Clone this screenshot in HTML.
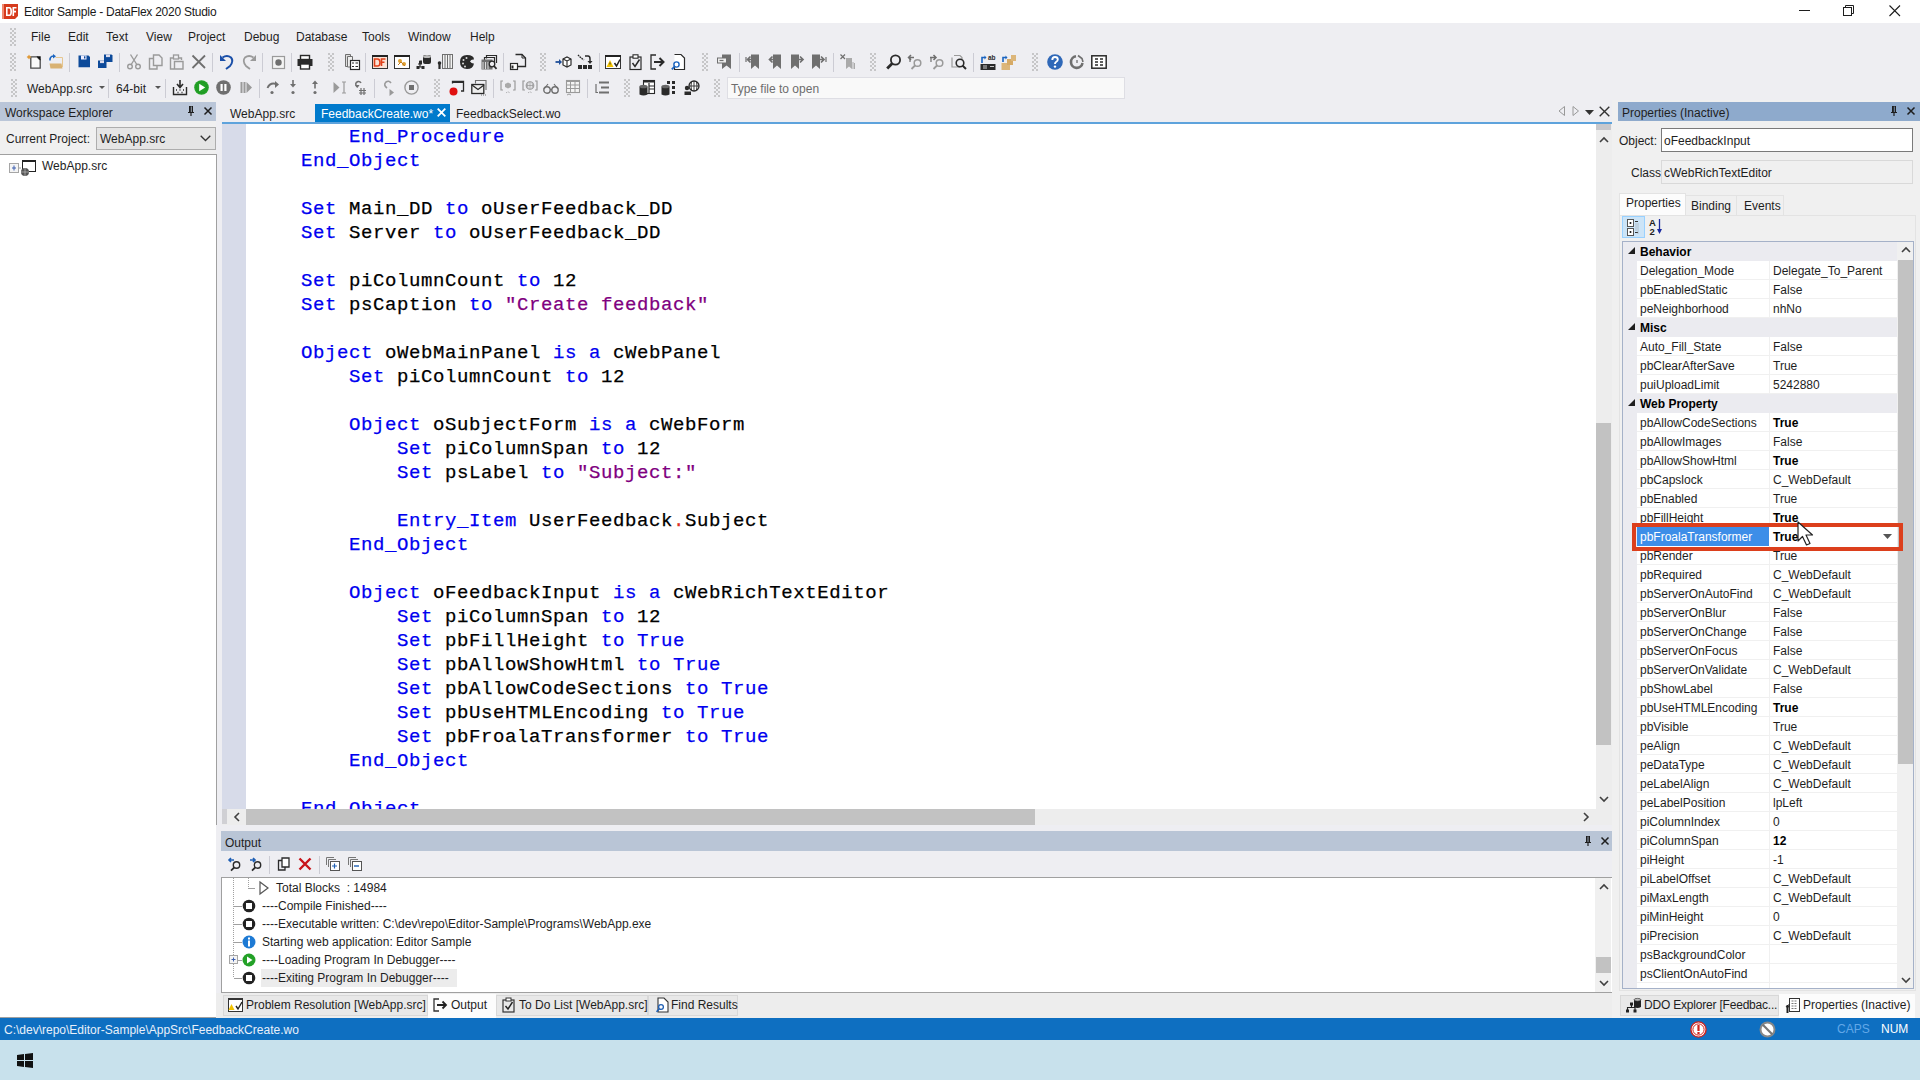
<!DOCTYPE html><html><head><meta charset="utf-8"><style>
*{margin:0;padding:0;box-sizing:border-box}
html,body{width:1920px;height:1080px;overflow:hidden;background:#eeeef2;font-family:"Liberation Sans",sans-serif;font-size:12px;color:#1e1e1e}
.a{position:absolute}
.t{position:absolute;white-space:nowrap;line-height:14px}
svg{position:absolute;overflow:visible}
.grip{position:absolute;width:6px;background-image:repeating-conic-gradient(transparent 0 25%,#c6c6c8 0 50%);background-size:4px 4px}
.sep{position:absolute;width:1px;background:#ccccd4}
.code{position:absolute;left:0;-webkit-text-stroke:0.25px currentColor;font-family:"Liberation Mono",monospace;font-size:19px;letter-spacing:0.6px;line-height:24px;white-space:pre;color:#000}
.k{color:#0000f0}
.s{color:#7f007f}
.prow{position:absolute;left:1637px;width:260px;height:19px}
</style></head><body><div class="a" style="left:0px;top:0px;width:1920px;height:23px;background:#fff"></div><div class="t" style="left:24px;top:5px;font-size:12px;letter-spacing:-0.25px;color:#1a1a1a">Editor Sample - DataFlex 2020 Studio</div><div class="a" style="left:0px;top:23px;width:1920px;height:77px;background:#eeeef2"></div><div class="t" style="left:31px;top:30px;">File</div><div class="t" style="left:68px;top:30px;">Edit</div><div class="t" style="left:106px;top:30px;">Text</div><div class="t" style="left:146px;top:30px;">View</div><div class="t" style="left:188px;top:30px;">Project</div><div class="t" style="left:244px;top:30px;">Debug</div><div class="t" style="left:296px;top:30px;">Database</div><div class="t" style="left:362px;top:30px;">Tools</div><div class="t" style="left:408px;top:30px;">Window</div><div class="t" style="left:470px;top:30px;">Help</div><div class="a" style="left:0px;top:100px;width:216px;height:918px;background:#f0f0f0"></div><div class="a" style="left:0px;top:102px;width:216px;height:19px;background:#bac6d8"></div><div class="t" style="left:5px;top:106px;">Workspace Explorer</div><div class="t" style="left:6px;top:132px;">Current Project:</div><div class="a" style="left:96px;top:127px;width:120px;height:23px;background:#e5e5e5;border:1px solid #adadad"></div><div class="t" style="left:100px;top:132px;">WebApp.src</div><div class="a" style="left:0px;top:154px;width:217px;height:864px;background:#fff;border-top:1px solid #a0a0a0;border-right:1px solid #a0a0a0;border-bottom:1px solid #a0a0a0"></div><div class="t" style="left:42px;top:159px;">WebApp.src</div><div class="a" style="left:216px;top:100px;width:1402px;height:23px;background:#eeeef2"></div><div class="t" style="left:230px;top:107px;">WebApp.src</div><div class="a" style="left:315px;top:104px;width:135px;height:18px;background:#007acc"></div><div class="t" style="left:321px;top:107px;color:#fff">FeedbackCreate.wo*</div><div class="t" style="left:456px;top:107px;">FeedbackSelect.wo</div><div class="a" style="left:222px;top:122px;width:1390px;height:2px;background:#5ea3dc"></div><div class="a" style="left:222px;top:124px;width:1390px;height:685px;background:#fff"></div><div class="a" style="left:222px;top:124px;width:24px;height:685px;background:#d7dbe9"></div><div class="a" style="left:1596px;top:124px;width:18px;height:685px;background:#ededed"></div><div class="a" style="left:1596px;top:423px;width:15px;height:322px;background:#c2c2c2"></div><div class="a" style="left:222px;top:809px;width:1392px;height:16px;background:#ededed"></div><div class="a" style="left:246px;top:809px;width:789px;height:16px;background:#c2c2c2"></div><div class="a" style="left:216px;top:825px;width:1402px;height:193px;background:#eeeef2"></div><div class="a" style="left:221px;top:831px;width:1393px;height:20px;background:#b9c5d6"></div><div class="t" style="left:225px;top:836px;">Output</div><div class="a" style="left:221px;top:877px;width:1393px;height:116px;background:#fff;border:1px solid #a0a0a0"></div><div class="a" style="left:216px;top:993px;width:1402px;height:25px;background:#ededed"></div><div class="a" style="left:0px;top:1018px;width:1920px;height:22px;background:#0e6fc1"></div><div class="t" style="left:4px;top:1023px;color:#e8f0fa">C:\dev\repo\Editor-Sample\AppSrc\FeedbackCreate.wo</div><div class="a" style="left:0px;top:1040px;width:1920px;height:40px;background:#c8e1ec"></div><div class="a" style="left:1612px;top:100px;width:308px;height:918px;background:#f0f0f0"></div><div class="a" style="left:1618px;top:102px;width:302px;height:19px;background:#8eaacc"></div><div class="t" style="left:1622px;top:106px;">Properties (Inactive)</div><div class="t" style="left:1619px;top:134px;">Object:</div><div class="a" style="left:1661px;top:128px;width:252px;height:24px;background:#fff;border:1px solid #7a7a7a"></div><div class="t" style="left:1664px;top:134px;">oFeedbackInput</div><div class="t" style="left:1631px;top:166px;">Class</div><div class="a" style="left:1661px;top:160px;width:252px;height:24px;background:#f0f0f0;border:1px solid #d9d9d9"></div><div class="t" style="left:1664px;top:166px;">cWebRichTextEditor</div><div class="a" style="left:1622px;top:241px;width:292px;height:750px;background:#fff;border:1px solid #a5b1c8"></div><div class="grip" style="left:10px;top:28px;height:18px"></div><div class="grip" style="left:10px;top:53px;height:18px"></div><div class="grip" style="left:11px;top:79px;height:18px"></div><svg style="left:26px;top:54px" width="16" height="16" viewBox="0 0 16 16"><path d="M4.8 2.8H11L14.2 6V14.2H4.8Z" stroke="#4a4a4a" stroke-width="1.3" fill="#fafafa"/><path d="M10.5 2.3L14.7 6.5V2.3Z" fill="#111"/><path d="M3 0.5L3.7 2.3L5.5 3L3.7 3.7L3 5.5L2.3 3.7L0.5 3L2.3 2.3Z" fill="#e09a3a"/><circle cx="3" cy="3" r="1.6" fill="#e09a3a"/></svg><svg style="left:48px;top:54px" width="16" height="16" viewBox="0 0 16 16"><path d="M7.5 3.5H14.5V13" stroke="#e6c690" stroke-width="1" fill="none"/><path d="M1.5 9.5H13.5L14.5 14.5H2.5Z" fill="#d9b273"/><path d="M2 6.5Q1.5 2.5 5.5 2" stroke="#1a64c0" stroke-width="1.6" fill="none"/><path d="M5 0L8 2.2L5 4.4Z" fill="#1a64c0"/></svg><div class="sep" style="left:69px;top:53px;height:19px"></div><svg style="left:77px;top:54px" width="16" height="16" viewBox="0 0 16 16"><path d="M1.5 1.5H11.5L13 3V13.3H1.5Z" fill="#0d4a9a"/><rect x="4" y="1.5" width="5.5" height="4" fill="#eef"/><rect x="7" y="2.3" width="1.4" height="2.2" fill="#0d4a9a"/></svg><svg style="left:98px;top:54px" width="16" height="16" viewBox="0 0 16 16"><path d="M6 0.5H13.5L14.5 1.5V8H6Z" fill="#0d4a9a"/><rect x="8" y="0.5" width="4" height="2.6" fill="#dde"/><path d="M0 6.5H7.5L8.5 7.5V14H0Z" fill="#0d4a9a"/><rect x="2" y="6.5" width="4" height="2.6" fill="#dde"/></svg><div class="sep" style="left:119px;top:53px;height:19px"></div><svg style="left:126px;top:54px" width="16" height="16" viewBox="0 0 16 16"><circle cx="4" cy="12.5" r="2.3" stroke="#9a9a9a" stroke-width="1.4" fill="none"/><circle cx="12" cy="12.5" r="2.3" stroke="#9a9a9a" stroke-width="1.4" fill="none"/><path d="M5.2 10.5L11.5 0.5M10.8 10.5L4.5 0.5" stroke="#9a9a9a" stroke-width="1.4"/></svg><svg style="left:148px;top:54px" width="16" height="16" viewBox="0 0 16 16"><path d="M5 4.5H1.5V15H9V11.5" stroke="#9a9a9a" stroke-width="1.4" fill="none"/><path d="M5.5 1H11L14 4V11.5H5.5Z" stroke="#9a9a9a" stroke-width="1.4" fill="#eeeef2"/></svg><svg style="left:169px;top:54px" width="16" height="16" viewBox="0 0 16 16"><path d="M4 4H1.5V15H5" stroke="#9a9a9a" stroke-width="1.4" fill="none"/><path d="M10 4H12.5V6" stroke="#9a9a9a" stroke-width="1.4" fill="none"/><rect x="4.5" y="1" width="5" height="4" stroke="#9a9a9a" stroke-width="1.3" fill="none"/><path d="M5.5 7.5H14V15H5.5Z" stroke="#9a9a9a" stroke-width="1.4" fill="none"/></svg><svg style="left:191px;top:54px" width="16" height="16" viewBox="0 0 16 16"><path d="M1.5 1.5L14 14M14 1.5L1.5 14" stroke="#6f6f6f" stroke-width="1.8"/></svg><div class="sep" style="left:212px;top:53px;height:19px"></div><svg style="left:219px;top:54px" width="16" height="16" viewBox="0 0 16 16"><path d="M3.5 3.5Q8 0.5 12 3.5Q15 7 11 12L7 15" stroke="#1a4fa8" stroke-width="2" fill="none"/><path d="M1 1V7H7Z" fill="#1a4fa8"/></svg><svg style="left:241px;top:54px" width="16" height="16" viewBox="0 0 16 16"><path d="M12.5 3.5Q8 0.5 4 3.5Q1 7 5 12L9 15" stroke="#9a9a9a" stroke-width="1.8" fill="none"/><path d="M15 1V7H9Z" fill="#9a9a9a"/></svg><div class="sep" style="left:262px;top:53px;height:19px"></div><svg style="left:271px;top:54px" width="16" height="16" viewBox="0 0 16 16"><rect x="1.5" y="2.5" width="12" height="12" stroke="#9a9a9a" stroke-width="1.2" fill="#f4f4f4"/><circle cx="7.5" cy="8.5" r="3.2" fill="#6f6f6f"/></svg><div class="sep" style="left:291px;top:53px;height:19px"></div><svg style="left:297px;top:54px" width="16" height="16" viewBox="0 0 16 16"><rect x="3.5" y="1.5" width="9" height="4" fill="#fff" stroke="#2a2a2a" stroke-width="1.4"/><path d="M0.5 5H15.5V12H0.5Z" fill="#2a2a2a"/><rect x="3.5" y="10" width="9" height="5" fill="#fff" stroke="#2a2a2a" stroke-width="1.4"/></svg><div class="grip" style="left:328px;top:53px;height:18px"></div><svg style="left:344px;top:54px" width="16" height="16" viewBox="0 0 16 16"><path d="M1.5 0.5H6.5V12.5H1.5Z" fill="#ddd" stroke="#6f6f6f"/><path d="M3.5 2.5H8.5V13H3.5Z" fill="#eee" stroke="#6f6f6f"/><rect x="6.5" y="6.5" width="9" height="9" fill="#fff" stroke="#2a2a2a" stroke-width="1.2"/><path d="M8 9H10M11.5 9H14M8 12.5H10M11.5 12.5H14" stroke="#2a2a2a" stroke-width="1.2"/></svg><div class="sep" style="left:365px;top:53px;height:19px"></div><svg style="left:372px;top:54px" width="16" height="16" viewBox="0 0 16 16"><rect x="0.5" y="1.5" width="15" height="13" fill="#fbe3d6" stroke="#333"/><rect x="0" y="1" width="16" height="2" fill="#222"/><path d="M2.5 5H5.5Q8 5 8 8.5Q8 12 5.5 12H2.5Z" fill="none" stroke="#e0401a" stroke-width="1.6"/><path d="M9.5 12V5H13.5M9.5 8.3H12.5" stroke="#e0401a" stroke-width="1.6" fill="none"/></svg><svg style="left:394px;top:54px" width="16" height="16" viewBox="0 0 16 16"><rect x="0.5" y="1.5" width="15" height="13" fill="#fff" stroke="#333"/><rect x="0" y="1" width="16" height="2" fill="#222"/><circle cx="6" cy="7" r="2" fill="#e0a030"/><circle cx="10" cy="10" r="2" fill="#e0a030"/><path d="M4 11L7 8L11 12" stroke="#c07a20" fill="none"/></svg><svg style="left:416px;top:54px" width="16" height="16" viewBox="0 0 16 16"><rect x="7" y="1" width="8" height="9" rx="2" fill="#2a2a2a"/><ellipse cx="11" cy="2.5" rx="4" ry="1.6" fill="#bbb"/><path d="M6 7H4V13M4 13H1.5M4 13H7M2 10H6" stroke="#2a2a2a" stroke-width="1.2" fill="none"/><rect x="0.5" y="12" width="3" height="3" fill="#2a2a2a"/><rect x="5.5" y="12" width="3" height="3" fill="#2a2a2a"/><rect x="3" y="7" width="3" height="3" fill="#2a2a2a"/></svg><svg style="left:437px;top:54px" width="16" height="16" viewBox="0 0 16 16"><rect x="5.5" y="0.5" width="10" height="14" fill="#f4f4f4" stroke="#6f6f6f"/><path d="M8 1V14M10.5 1V14M13 1V14" stroke="#6f6f6f"/><path d="M2.5 9V15" stroke="#2a2a2a" stroke-width="2.2"/><circle cx="2.5" cy="9" r="1.8" fill="#2a2a2a"/></svg><svg style="left:459px;top:54px" width="16" height="16" viewBox="0 0 16 16"><path d="M8 1Q15 1 15 5.5Q12 5 11 7.5Q13 10 15 9.5Q14 15 8 15Q1 15 1 8Q1 1 8 1Z" fill="#2a2a2a"/><circle cx="4.5" cy="6" r="1" fill="#ddd"/><circle cx="7.5" cy="4" r="1" fill="#ddd"/><circle cx="4" cy="9.5" r="1" fill="#ddd"/><circle cx="6" cy="12.5" r="1" fill="#ddd"/></svg><svg style="left:481px;top:54px" width="16" height="16" viewBox="0 0 16 16"><path d="M5.5 4.5V1.5H15.5V9" stroke="#2a2a2a" stroke-width="1.2" fill="none"/><path d="M3.5 6.5V3.5H13.5V9" stroke="#2a2a2a" stroke-width="1.2" fill="none"/><rect x="0.5" y="5.5" width="11" height="10" fill="#6f6f6f"/><path d="M2 8V15M4.5 8V15M7 8V15" stroke="#ddd"/><circle cx="11" cy="10" r="2.8" fill="#eeeef2" stroke="#2a2a2a" stroke-width="1.3"/><path d="M13 12L15.5 14.8" stroke="#2a2a2a" stroke-width="1.8"/></svg><div class="sep" style="left:503px;top:53px;height:19px"></div><svg style="left:510px;top:54px" width="16" height="16" viewBox="0 0 16 16"><path d="M5.5 0.5H12L15.5 4V12.5H5.5" stroke="#2a2a2a" stroke-width="1.3" fill="none"/><path d="M12 0.5V4H15.5" stroke="#2a2a2a" fill="none"/><rect x="0.5" y="9.5" width="7" height="6" fill="#fff" stroke="#2a2a2a" stroke-width="1.2"/><rect x="1.5" y="11.5" width="2" height="3" fill="#2a2a2a"/></svg><div class="grip" style="left:540px;top:53px;height:18px"></div><svg style="left:555px;top:54px" width="16" height="16" viewBox="0 0 16 16"><path d="M0.5 8H5.5" stroke="#1f4f9a" stroke-width="1.8"/><path d="M4 5L7 8L4 11Z" fill="#1f4f9a"/><path d="M8 5L12 3L16 5V11L12 13L8 11Z" fill="#fff" stroke="#2a2a2a" stroke-width="1.2"/><path d="M8 5L12 7L16 5M12 7V13" stroke="#2a2a2a" stroke-width="1.1" fill="none"/></svg><svg style="left:577px;top:54px" width="16" height="16" viewBox="0 0 16 16"><path d="M1 1L4 4L7 6" stroke="#2a2a2a" stroke-width="1.4" stroke-dasharray="1.5 1"/><path d="M8 2H11Q13 2 13 5V8" stroke="#2a2a2a" stroke-width="1.5" fill="none"/><path d="M10.5 7L13 10L15.5 7Z" fill="#2a2a2a"/><rect x="1" y="11" width="4" height="4" fill="#2a2a2a"/><rect x="6" y="11" width="4" height="4" fill="#2a2a2a"/><rect x="11" y="11" width="4" height="4" fill="#2a2a2a"/></svg><div class="sep" style="left:599px;top:53px;height:19px"></div><svg style="left:605px;top:54px" width="16" height="16" viewBox="0 0 16 16"><rect x="0.5" y="1.5" width="15" height="13" fill="#fff" stroke="#333"/><rect x="0" y="1" width="16" height="2" fill="#222"/><path d="M5 6L8.5 13H1.5Z" fill="#f2c200"/><path d="M5 8.5V10.5" stroke="#333"/><path d="M9.5 9L11.5 12L15 5.5" stroke="#222" stroke-width="1.5" fill="none"/></svg><svg style="left:629px;top:54px" width="16" height="16" viewBox="0 0 16 16"><rect x="1" y="3" width="11" height="12.5" fill="none" stroke="#2a2a2a" stroke-width="1.2"/><rect x="4" y="0.8" width="5" height="3.4" fill="#fff" stroke="#2a2a2a" stroke-width="1.1"/><path d="M3.5 9L6 12.5L10.5 5.5" stroke="#2a2a2a" stroke-width="1.5" fill="none"/></svg><svg style="left:650px;top:54px" width="16" height="16" viewBox="0 0 16 16"><path d="M6 1H1V15H6" stroke="#2a2a2a" stroke-width="1.3" fill="none"/><path d="M4 8H13.5M9.5 4L13.5 8L9.5 12" stroke="#2a2a2a" stroke-width="2" fill="none"/></svg><svg style="left:671px;top:54px" width="16" height="16" viewBox="0 0 16 16"><path d="M3.5 0.5H10L13.5 4V15.5H3.5V9" stroke="#2a2a2a" stroke-width="1.2" fill="#fff"/><circle cx="5.5" cy="10.5" r="2.6" fill="#fff" stroke="#1a64c0" stroke-width="1.4"/><path d="M3.5 12.5L0.8 15.3" stroke="#1a64c0" stroke-width="1.8"/></svg><div class="grip" style="left:702px;top:53px;height:18px"></div><svg style="left:717px;top:54px" width="16" height="16" viewBox="0 0 16 16"><path d="M5 0.5H14V15L9.5 11.5L5 15Z" fill="#6f6f6f"/><rect x="0.5" y="4" width="9" height="5" fill="#eee" stroke="#6f6f6f"/><path d="M2.5 6.5H6.5" stroke="#6f6f6f" stroke-width="1.2"/></svg><div class="sep" style="left:739px;top:53px;height:19px"></div><svg style="left:745px;top:54px" width="16" height="16" viewBox="0 0 16 16"><path d="M6 0.5H14V15L10 11.5L6 15Z" fill="#6f6f6f"/><path d="M1 3V8" stroke="#6f6f6f" stroke-width="1.2"/><path d="M3 5.5H9M5.5 2.5L2.5 5.5L5.5 8.5" stroke="#6f6f6f" stroke-width="1.7" fill="none"/></svg><svg style="left:768px;top:54px" width="16" height="16" viewBox="0 0 16 16"><path d="M5 0.5H13V15L9 11.5L5 15Z" fill="#6f6f6f"/><path d="M1.5 5.5H8M4.5 2.5L1.5 5.5L4.5 8.5" stroke="#6f6f6f" stroke-width="1.7" fill="none"/></svg><svg style="left:790px;top:54px" width="16" height="16" viewBox="0 0 16 16"><path d="M1 0.5H9V15L5 11.5L1 15Z" fill="#6f6f6f"/><path d="M7 5.5H13M10 2.5L13 5.5L10 8.5" stroke="#6f6f6f" stroke-width="1.7" fill="none"/></svg><svg style="left:811px;top:54px" width="16" height="16" viewBox="0 0 16 16"><path d="M1 0.5H9V15L5 11.5L1 15Z" fill="#6f6f6f"/><path d="M15 3V8" stroke="#6f6f6f" stroke-width="1.2"/><path d="M7 5.5H12.5M10 2.5L13 5.5L10 8.5" stroke="#6f6f6f" stroke-width="1.7" fill="none"/></svg><div class="sep" style="left:833px;top:53px;height:19px"></div><svg style="left:840px;top:54px" width="16" height="16" viewBox="0 0 16 16"><path d="M6 4H12V15L9 12.5L6 15Z" fill="#aaa"/><path d="M0.5 0.5L5 5M5 0.5L0.5 5" stroke="#6f6f6f" stroke-width="1.2"/><path d="M13 8V15M14.5 9V15" stroke="#aaa"/></svg><div class="grip" style="left:870px;top:53px;height:18px"></div><svg style="left:886px;top:54px" width="16" height="16" viewBox="0 0 16 16"><circle cx="9.5" cy="6" r="4.6" fill="none" stroke="#2a2a2a" stroke-width="1.8"/><path d="M6.2 9.5L1.2 14.5" stroke="#2a2a2a" stroke-width="2.8"/></svg><svg style="left:907px;top:54px" width="16" height="16" viewBox="0 0 16 16"><circle cx="10.5" cy="9" r="3.3" fill="none" stroke="#9a9a9a" stroke-width="1.5"/><path d="M8 11.5L4.5 15" stroke="#9a9a9a" stroke-width="1.8"/><path d="M1.5 3.5H7M4 1L1.5 3.5L4 6" stroke="#6f6f6f" stroke-width="1.5" fill="none"/><path d="M3 4V8" stroke="#6f6f6f" stroke-width="1.2"/></svg><svg style="left:929px;top:54px" width="16" height="16" viewBox="0 0 16 16"><circle cx="10.5" cy="9" r="3.3" fill="none" stroke="#9a9a9a" stroke-width="1.5"/><path d="M8 11.5L4.5 15" stroke="#9a9a9a" stroke-width="1.8"/><path d="M1 3.5H7M4.5 1L7 3.5L4.5 6" stroke="#6f6f6f" stroke-width="1.5" fill="none"/><path d="M2 4V8" stroke="#6f6f6f" stroke-width="1.2"/></svg><svg style="left:951px;top:54px" width="16" height="16" viewBox="0 0 16 16"><path d="M1 3.5V13H9" stroke="#9a9a9a" stroke-width="1.2" fill="none"/><path d="M3 1.5H9L11 3.5V5" stroke="#9a9a9a" stroke-width="1.2" fill="none"/><circle cx="9" cy="9" r="3.8" fill="#eeeef2" stroke="#2a2a2a" stroke-width="1.6"/><path d="M11.5 11.5L15 15" stroke="#2a2a2a" stroke-width="2"/></svg><div class="sep" style="left:973px;top:53px;height:19px"></div><svg style="left:980px;top:54px" width="16" height="16" viewBox="0 0 16 16"><path d="M2 9V3.5H5" stroke="#1a64c0" stroke-width="1.6" fill="none"/><path d="M4.5 1.5L6.5 3.5L4.5 5.5Z" fill="#1a64c0"/><text x="8" y="6" font-family="Liberation Sans" font-size="6.5" font-weight="bold" fill="#2a2a2a">ab</text><rect x="0.5" y="10" width="15" height="6" fill="#2a2a2a"/><path d="M4 11V15M6 11V15M10 12.5H14" stroke="#ddd" stroke-width="0.9"/></svg><svg style="left:1001px;top:54px" width="16" height="16" viewBox="0 0 16 16"><path d="M0.5 9H9V16H0.5Z" fill="#dcb67a"/><path d="M6 5H12V11H6Z" fill="#d6aa66"/><path d="M10 1H15V7H10Z" fill="#dcb67a"/><path d="M2 8V3.5H5" stroke="#1a64c0" stroke-width="1.6" fill="none"/><path d="M4.5 1.5L6.5 3.5L4.5 5.5Z" fill="#1a64c0"/></svg><div class="grip" style="left:1032px;top:53px;height:18px"></div><svg style="left:1047px;top:54px" width="16" height="16" viewBox="0 0 16 16"><circle cx="8" cy="8" r="7.8" fill="#2f68b8"/><path d="M5.3 6Q5.3 3 8 3Q10.8 3 10.8 5.5Q10.8 7 9 8Q8 8.6 8 10" stroke="#fff" stroke-width="1.9" fill="none"/><circle cx="8" cy="12.6" r="1.2" fill="#fff"/></svg><svg style="left:1069px;top:54px" width="16" height="16" viewBox="0 0 16 16"><path d="M13.5 9A5.8 5.8 0 1 1 7 2.3" stroke="#6f6f6f" stroke-width="2.6" fill="none"/><path d="M9 1.5L13 4.5L14 8" stroke="#6f6f6f" stroke-width="1.6" fill="none"/><path d="M8 6V9" stroke="#6f6f6f" stroke-width="1.3"/></svg><svg style="left:1091px;top:54px" width="16" height="16" viewBox="0 0 16 16"><rect x="0.8" y="1.8" width="14.4" height="12.4" fill="#fff" stroke="#2a2a2a" stroke-width="1.5"/><path d="M4 5H7M9 5H12M4 8H7M9 8H12M4 11H7M9 11H12" stroke="#2a2a2a" stroke-width="1.5"/></svg><svg style="left:172px;top:80px" width="16" height="16" viewBox="0 0 16 16"><path d="M1.5 7V14.5H14.5V7" stroke="#2a2a2a" stroke-width="1.4" fill="none"/><path d="M8 0V7M5 4L8 7.5L11 4" stroke="#2a2a2a" stroke-width="1.6" fill="none"/><path d="M4 10H5M7.5 10H8.5M11 10H12M5.5 12.5H6.5M9.5 12.5H10.5" stroke="#2a2a2a" stroke-width="1.3"/></svg><svg style="left:194px;top:80px" width="16" height="16" viewBox="0 0 16 16"><circle cx="7.5" cy="7.5" r="7.3" fill="#23a127"/><circle cx="7.5" cy="7.5" r="5.3" fill="none" stroke="#1b8f1f" stroke-width="0.5"/><path d="M5.2 3.8L11.2 7.5L5.2 11.2Z" fill="#fff"/></svg><svg style="left:216px;top:80px" width="16" height="16" viewBox="0 0 16 16"><circle cx="7.5" cy="7.5" r="7.3" fill="#6f6f6f"/><rect x="4.5" y="4" width="2.2" height="7" fill="#fff"/><rect x="8.3" y="4" width="2.2" height="7" fill="#fff"/></svg><svg style="left:240px;top:80px" width="16" height="16" viewBox="0 0 16 16"><rect x="0.5" y="2" width="2" height="11" fill="#9a9a9a"/><rect x="3.5" y="2" width="2" height="11" fill="#9a9a9a"/><path d="M6.5 2L12 7.5L6.5 13Z" fill="#9a9a9a"/></svg><div class="sep" style="left:259px;top:79px;height:19px"></div><svg style="left:266px;top:80px" width="16" height="16" viewBox="0 0 16 16"><path d="M1.5 8Q4 2 10.5 4" stroke="#6f6f6f" stroke-width="1.9" fill="none"/><path d="M9 1L13 4.5L9 8Z" fill="#6f6f6f"/><circle cx="6" cy="12.5" r="1.6" fill="#6f6f6f"/></svg><svg style="left:289px;top:80px" width="16" height="16" viewBox="0 0 16 16"><path d="M4 0V6" stroke="#6f6f6f" stroke-width="1.6"/><path d="M1 4L4 7.5L7 4Z" fill="#6f6f6f"/><circle cx="4" cy="12.5" r="1.6" fill="#6f6f6f"/></svg><svg style="left:311px;top:80px" width="16" height="16" viewBox="0 0 16 16"><path d="M4 2V8.5" stroke="#6f6f6f" stroke-width="1.6"/><path d="M1 4L4 0.5L7 4Z" fill="#6f6f6f"/><circle cx="4" cy="12.5" r="1.6" fill="#6f6f6f"/></svg><svg style="left:333px;top:80px" width="16" height="16" viewBox="0 0 16 16"><path d="M0.5 2L6.5 7.5L0.5 13Z" fill="#9a9a9a"/><path d="M9 2H13M11 2V13M9 13H13" stroke="#9a9a9a" stroke-width="1.2"/></svg><svg style="left:354px;top:80px" width="16" height="16" viewBox="0 0 16 16"><path d="M3 7Q0 3 4 1.5Q6 1 7 3" stroke="#6f6f6f" stroke-width="1.5" fill="none"/><path d="M1 5L3.5 8L5.5 5Z" fill="#6f6f6f"/><path d="M7 8V15M10 8V15M5 10.5H12M5 13H12" stroke="#6f6f6f" stroke-width="1.2"/></svg><div class="sep" style="left:374px;top:79px;height:19px"></div><svg style="left:381px;top:80px" width="16" height="16" viewBox="0 0 16 16"><path d="M6 8Q2 5 5 2Q8 0 10 3" stroke="#9a9a9a" stroke-width="1.6" fill="none"/><path d="M8.5 9L13 12.5L8.5 16Z" fill="#9a9a9a"/></svg><svg style="left:404px;top:80px" width="16" height="16" viewBox="0 0 16 16"><circle cx="7.5" cy="7.5" r="6.6" fill="none" stroke="#9a9a9a" stroke-width="1.4"/><rect x="5" y="5" width="5" height="5" fill="#6f6f6f"/></svg><div class="grip" style="left:434px;top:79px;height:18px"></div><svg style="left:449px;top:80px" width="16" height="16" viewBox="0 0 16 16"><path d="M3.5 3.5V1.5H14.5V11H12" stroke="#2a2a2a" stroke-width="1.3" fill="none"/><rect x="3" y="1" width="12" height="2" fill="#2a2a2a"/><circle cx="4.5" cy="11.5" r="4" fill="#e01010"/></svg><svg style="left:471px;top:80px" width="16" height="16" viewBox="0 0 16 16"><path d="M4.5 3.5V0.5H15V10" stroke="#6f6f6f" stroke-width="1.1" fill="none"/><rect x="0.8" y="4.5" width="12" height="9" fill="#eee" stroke="#2a2a2a" stroke-width="1.3"/><path d="M1 5L7 9.5L13 5" stroke="#2a2a2a" stroke-width="1.2" fill="none"/><path d="M10 15H15" stroke="#6f6f6f" stroke-dasharray="1 1"/></svg><div class="sep" style="left:493px;top:79px;height:19px"></div><svg style="left:500px;top:80px" width="16" height="16" viewBox="0 0 16 16"><path d="M3 1H1V10H3M13 1H15V10H13" stroke="#9a9a9a" stroke-width="1.2" fill="none"/><path d="M5 4L8 2.5L11 4V7L8 8.5L5 7Z" fill="#aaa"/><path d="M6 13Q8 11 10 13" stroke="#9a9a9a" fill="none" stroke-dasharray="1 1"/></svg><svg style="left:522px;top:80px" width="16" height="16" viewBox="0 0 16 16"><path d="M3 1H1V10H3M13 1H15V10H13" stroke="#9a9a9a" stroke-width="1.2" fill="none"/><circle cx="8" cy="5.5" r="3.8" fill="none" stroke="#9a9a9a" stroke-width="1.1"/><path d="M4.5 5.5H11.5M8 1.7V9.3M6 2.5Q5 5.5 6 8.5M10 2.5Q11 5.5 10 8.5" stroke="#9a9a9a" stroke-width="0.8" fill="none"/><path d="M6 13Q8 11 10 13" stroke="#9a9a9a" fill="none" stroke-dasharray="1 1"/></svg><svg style="left:543px;top:80px" width="16" height="16" viewBox="0 0 16 16"><circle cx="4" cy="10" r="3.2" fill="none" stroke="#6f6f6f" stroke-width="1.4"/><circle cx="12" cy="10" r="3.2" fill="none" stroke="#6f6f6f" stroke-width="1.4"/><path d="M1 9L5 4M15 9L11 4M7 9.5H9" stroke="#6f6f6f" stroke-width="1.2"/></svg><svg style="left:565px;top:80px" width="16" height="16" viewBox="0 0 16 16"><rect x="1.5" y="0.5" width="13" height="12" fill="#f4f4f4" stroke="#9a9a9a" stroke-width="1.1"/><rect x="1" y="0" width="14" height="2" fill="#9a9a9a"/><path d="M1 5H15M1 8.5H15M5.5 1V13M10 1V13" stroke="#9a9a9a"/><path d="M2 15Q4 13 6 15" stroke="#9a9a9a" fill="none"/></svg><div class="sep" style="left:587px;top:79px;height:19px"></div><svg style="left:594px;top:80px" width="16" height="16" viewBox="0 0 16 16"><path d="M5 2.5H15M7 7.5H15M5 12.5H15" stroke="#6f6f6f" stroke-width="2.2"/><path d="M2 4V12.5H4" stroke="#6f6f6f" stroke-width="1.2" fill="none"/></svg><div class="grip" style="left:624px;top:79px;height:18px"></div><svg style="left:639px;top:80px" width="16" height="16" viewBox="0 0 16 16"><rect x="4.5" y="0.5" width="11" height="13" fill="#fff" stroke="#2a2a2a" stroke-width="1.1"/><rect x="4" y="0" width="12" height="2.5" fill="#2a2a2a"/><path d="M10 3V13M10 6H15M10 9H15" stroke="#2a2a2a" stroke-width="1.2"/><path d="M0.5 6.5H8.5V14.5Q4.5 16.5 0.5 14.5Z" fill="#2a2a2a"/><ellipse cx="4.5" cy="6.5" rx="4" ry="1.8" fill="#666"/></svg><svg style="left:661px;top:80px" width="16" height="16" viewBox="0 0 16 16"><path d="M6 1H9V4H6ZM11 1H14V4H11ZM11 6H14V9H11ZM11 11H14V14H11Z" fill="#2a2a2a"/><path d="M0.5 6.5H8.5V14.5Q4.5 16.5 0.5 14.5Z" fill="#2a2a2a"/><ellipse cx="4.5" cy="6.5" rx="4" ry="1.8" fill="#666"/></svg><svg style="left:684px;top:80px" width="16" height="16" viewBox="0 0 16 16"><circle cx="10" cy="6" r="5" fill="#fff" stroke="#2a2a2a" stroke-width="1.3"/><path d="M5 6H15M10 1V11M7.5 2Q6.5 6 7.5 10M12.5 2Q13.5 6 12.5 10" stroke="#2a2a2a" stroke-width="0.9" fill="none"/><circle cx="3" cy="8" r="2.2" fill="#2a2a2a"/><path d="M0.5 11.5H7V15H0.5Z" fill="#2a2a2a"/></svg><div class="grip" style="left:714px;top:79px;height:18px"></div><div class="t" style="left:27px;top:82px">WebApp.src</div><svg style="left:99px;top:86px" width="6" height="3"><path d="M0 0H6L3 3Z" fill="#555"/></svg><div class="sep" style="left:108px;top:79px;height:19px"></div><div class="t" style="left:116px;top:82px">64-bit</div><svg style="left:155px;top:86px" width="6" height="3"><path d="M0 0H6L3 3Z" fill="#555"/></svg><div class="sep" style="left:165px;top:79px;height:19px"></div><div class="a" style="left:727px;top:77px;width:398px;height:22px;background:#f9f9f9;border:1px solid #dedee4"></div><div class="t" style="left:731px;top:82px;color:#6d6d6d">Type file to open</div><div class="a" style="left:246px;top:124px;width:1350px;height:685px;overflow:hidden"><div class="code" style="left:55px;top:1px">    <span class="k">End_Procedure</span></div><div class="code" style="left:55px;top:25px"><span class="k">End_Object</span></div><div class="code" style="left:55px;top:49px"></div><div class="code" style="left:55px;top:73px"><span class="k">Set</span> Main_DD <span class="k">to</span> oUserFeedback_DD</div><div class="code" style="left:55px;top:97px"><span class="k">Set</span> Server <span class="k">to</span> oUserFeedback_DD</div><div class="code" style="left:55px;top:121px"></div><div class="code" style="left:55px;top:145px"><span class="k">Set</span> piColumnCount <span class="k">to</span> 12</div><div class="code" style="left:55px;top:169px"><span class="k">Set</span> psCaption <span class="k">to</span> <span class="s">&quot;Create feedback&quot;</span></div><div class="code" style="left:55px;top:193px"></div><div class="code" style="left:55px;top:217px"><span class="k">Object</span> oWebMainPanel <span class="k">is</span> <span class="k">a</span> cWebPanel</div><div class="code" style="left:55px;top:241px">    <span class="k">Set</span> piColumnCount <span class="k">to</span> 12</div><div class="code" style="left:55px;top:265px"></div><div class="code" style="left:55px;top:289px">    <span class="k">Object</span> oSubjectForm <span class="k">is</span> <span class="k">a</span> cWebForm</div><div class="code" style="left:55px;top:313px">        <span class="k">Set</span> piColumnSpan <span class="k">to</span> 12</div><div class="code" style="left:55px;top:337px">        <span class="k">Set</span> psLabel <span class="k">to</span> <span class="s">&quot;Subject:&quot;</span></div><div class="code" style="left:55px;top:361px"></div><div class="code" style="left:55px;top:385px">        <span class="k">Entry_Item</span> UserFeedback<span style="color:#e0301e">.</span>Subject</div><div class="code" style="left:55px;top:409px">    <span class="k">End_Object</span></div><div class="code" style="left:55px;top:433px"></div><div class="code" style="left:55px;top:457px">    <span class="k">Object</span> oFeedbackInput <span class="k">is</span> <span class="k">a</span> cWebRichTextEditor</div><div class="code" style="left:55px;top:481px">        <span class="k">Set</span> piColumnSpan <span class="k">to</span> 12</div><div class="code" style="left:55px;top:505px">        <span class="k">Set</span> pbFillHeight <span class="k">to</span> <span class="k">True</span></div><div class="code" style="left:55px;top:529px">        <span class="k">Set</span> pbAllowShowHtml <span class="k">to</span> <span class="k">True</span></div><div class="code" style="left:55px;top:553px">        <span class="k">Set</span> pbAllowCodeSections <span class="k">to</span> <span class="k">True</span></div><div class="code" style="left:55px;top:577px">        <span class="k">Set</span> pbUseHTMLEncoding <span class="k">to</span> <span class="k">True</span></div><div class="code" style="left:55px;top:601px">        <span class="k">Set</span> pbFroalaTransformer <span class="k">to</span> <span class="k">True</span></div><div class="code" style="left:55px;top:625px">    <span class="k">End_Object</span></div><div class="code" style="left:55px;top:649px"></div><div class="code" style="left:55px;top:673px"><span class="k">End_Object</span></div></div><div class="a" style="left:1619px;top:193px;width:67px;height:23px;background:#fcfcfc;border:1px solid #e3e3e3;border-bottom:none"></div><div class="t" style="left:1626px;top:196px">Properties</div><div class="a" style="left:1686px;top:195px;width:51px;height:21px;background:#f0f0f0;border:1px solid #e3e3e3;border-left:none;border-bottom:none"></div><div class="t" style="left:1691px;top:199px">Binding</div><div class="a" style="left:1737px;top:195px;width:47px;height:21px;background:#f0f0f0;border:1px solid #e3e3e3;border-left:none;border-bottom:none"></div><div class="t" style="left:1744px;top:199px">Events</div><div class="a" style="left:1619px;top:215px;width:297px;height:776px;background:#f0f0f0;border:1px solid #e3e3e3"></div><div class="a" style="left:1622px;top:216px;width:23px;height:22px;background:#cce4f7;border:1px solid #99d1ff"></div><div class="a" style="left:1622px;top:241px;width:292px;height:748px;background:#fff;border:1px solid #a5b1c8;overflow:hidden"><div class="a" style="left:0;top:0px;width:274px;height:19px;background:#ebebf0"></div><svg style="left:5px;top:5px" width="7" height="7"><path d="M7 0V7H0Z" fill="#1e1e1e"/></svg><div class="t" style="left:17px;top:3px;font-weight:bold;color:#000">Behavior</div><div class="a" style="left:0;top:19px;width:14px;height:19px;background:#ebebf0"></div><div class="a" style="left:14px;top:37px;width:260px;height:1px;background:#f0f0f0"></div><div class="a" style="left:146px;top:19px;width:1px;height:19px;background:#f0f0f0"></div><div class="t" style="left:17px;top:22px">Delegation_Mode</div><div class="t" style="left:150px;top:22px;">Delegate_To_Parent</div><div class="a" style="left:0;top:38px;width:14px;height:19px;background:#ebebf0"></div><div class="a" style="left:14px;top:56px;width:260px;height:1px;background:#f0f0f0"></div><div class="a" style="left:146px;top:38px;width:1px;height:19px;background:#f0f0f0"></div><div class="t" style="left:17px;top:41px">pbEnabledStatic</div><div class="t" style="left:150px;top:41px;">False</div><div class="a" style="left:0;top:57px;width:14px;height:19px;background:#ebebf0"></div><div class="a" style="left:14px;top:75px;width:260px;height:1px;background:#f0f0f0"></div><div class="a" style="left:146px;top:57px;width:1px;height:19px;background:#f0f0f0"></div><div class="t" style="left:17px;top:60px">peNeighborhood</div><div class="t" style="left:150px;top:60px;">nhNo</div><div class="a" style="left:0;top:76px;width:274px;height:19px;background:#ebebf0"></div><svg style="left:5px;top:81px" width="7" height="7"><path d="M7 0V7H0Z" fill="#1e1e1e"/></svg><div class="t" style="left:17px;top:79px;font-weight:bold;color:#000">Misc</div><div class="a" style="left:0;top:95px;width:14px;height:19px;background:#ebebf0"></div><div class="a" style="left:14px;top:113px;width:260px;height:1px;background:#f0f0f0"></div><div class="a" style="left:146px;top:95px;width:1px;height:19px;background:#f0f0f0"></div><div class="t" style="left:17px;top:98px">Auto_Fill_State</div><div class="t" style="left:150px;top:98px;">False</div><div class="a" style="left:0;top:114px;width:14px;height:19px;background:#ebebf0"></div><div class="a" style="left:14px;top:132px;width:260px;height:1px;background:#f0f0f0"></div><div class="a" style="left:146px;top:114px;width:1px;height:19px;background:#f0f0f0"></div><div class="t" style="left:17px;top:117px">pbClearAfterSave</div><div class="t" style="left:150px;top:117px;">True</div><div class="a" style="left:0;top:133px;width:14px;height:19px;background:#ebebf0"></div><div class="a" style="left:14px;top:151px;width:260px;height:1px;background:#f0f0f0"></div><div class="a" style="left:146px;top:133px;width:1px;height:19px;background:#f0f0f0"></div><div class="t" style="left:17px;top:136px">puiUploadLimit</div><div class="t" style="left:150px;top:136px;">5242880</div><div class="a" style="left:0;top:152px;width:274px;height:19px;background:#ebebf0"></div><svg style="left:5px;top:157px" width="7" height="7"><path d="M7 0V7H0Z" fill="#1e1e1e"/></svg><div class="t" style="left:17px;top:155px;font-weight:bold;color:#000">Web Property</div><div class="a" style="left:0;top:171px;width:14px;height:19px;background:#ebebf0"></div><div class="a" style="left:14px;top:189px;width:260px;height:1px;background:#f0f0f0"></div><div class="a" style="left:146px;top:171px;width:1px;height:19px;background:#f0f0f0"></div><div class="t" style="left:17px;top:174px">pbAllowCodeSections</div><div class="t" style="left:150px;top:174px;font-weight:bold;color:#000;">True</div><div class="a" style="left:0;top:190px;width:14px;height:19px;background:#ebebf0"></div><div class="a" style="left:14px;top:208px;width:260px;height:1px;background:#f0f0f0"></div><div class="a" style="left:146px;top:190px;width:1px;height:19px;background:#f0f0f0"></div><div class="t" style="left:17px;top:193px">pbAllowImages</div><div class="t" style="left:150px;top:193px;">False</div><div class="a" style="left:0;top:209px;width:14px;height:19px;background:#ebebf0"></div><div class="a" style="left:14px;top:227px;width:260px;height:1px;background:#f0f0f0"></div><div class="a" style="left:146px;top:209px;width:1px;height:19px;background:#f0f0f0"></div><div class="t" style="left:17px;top:212px">pbAllowShowHtml</div><div class="t" style="left:150px;top:212px;font-weight:bold;color:#000;">True</div><div class="a" style="left:0;top:228px;width:14px;height:19px;background:#ebebf0"></div><div class="a" style="left:14px;top:246px;width:260px;height:1px;background:#f0f0f0"></div><div class="a" style="left:146px;top:228px;width:1px;height:19px;background:#f0f0f0"></div><div class="t" style="left:17px;top:231px">pbCapslock</div><div class="t" style="left:150px;top:231px;">C_WebDefault</div><div class="a" style="left:0;top:247px;width:14px;height:19px;background:#ebebf0"></div><div class="a" style="left:14px;top:265px;width:260px;height:1px;background:#f0f0f0"></div><div class="a" style="left:146px;top:247px;width:1px;height:19px;background:#f0f0f0"></div><div class="t" style="left:17px;top:250px">pbEnabled</div><div class="t" style="left:150px;top:250px;">True</div><div class="a" style="left:0;top:266px;width:14px;height:19px;background:#ebebf0"></div><div class="a" style="left:14px;top:284px;width:260px;height:1px;background:#f0f0f0"></div><div class="a" style="left:146px;top:266px;width:1px;height:19px;background:#f0f0f0"></div><div class="t" style="left:17px;top:269px">pbFillHeight</div><div class="t" style="left:150px;top:269px;font-weight:bold;color:#000;">True</div><div class="a" style="left:0;top:285px;width:14px;height:19px;background:#ebebf0"></div><div class="a" style="left:14px;top:303px;width:260px;height:1px;background:#f0f0f0"></div><div class="a" style="left:146px;top:285px;width:1px;height:19px;background:#f0f0f0"></div><div class="t" style="left:17px;top:288px">pbFroalaTransformer</div><div class="t" style="left:150px;top:288px;font-weight:bold;color:#000;">True</div><div class="a" style="left:0;top:304px;width:14px;height:19px;background:#ebebf0"></div><div class="a" style="left:14px;top:322px;width:260px;height:1px;background:#f0f0f0"></div><div class="a" style="left:146px;top:304px;width:1px;height:19px;background:#f0f0f0"></div><div class="t" style="left:17px;top:307px">pbRender</div><div class="t" style="left:150px;top:307px;">True</div><div class="a" style="left:0;top:323px;width:14px;height:19px;background:#ebebf0"></div><div class="a" style="left:14px;top:341px;width:260px;height:1px;background:#f0f0f0"></div><div class="a" style="left:146px;top:323px;width:1px;height:19px;background:#f0f0f0"></div><div class="t" style="left:17px;top:326px">pbRequired</div><div class="t" style="left:150px;top:326px;">C_WebDefault</div><div class="a" style="left:0;top:342px;width:14px;height:19px;background:#ebebf0"></div><div class="a" style="left:14px;top:360px;width:260px;height:1px;background:#f0f0f0"></div><div class="a" style="left:146px;top:342px;width:1px;height:19px;background:#f0f0f0"></div><div class="t" style="left:17px;top:345px">pbServerOnAutoFind</div><div class="t" style="left:150px;top:345px;">C_WebDefault</div><div class="a" style="left:0;top:361px;width:14px;height:19px;background:#ebebf0"></div><div class="a" style="left:14px;top:379px;width:260px;height:1px;background:#f0f0f0"></div><div class="a" style="left:146px;top:361px;width:1px;height:19px;background:#f0f0f0"></div><div class="t" style="left:17px;top:364px">pbServerOnBlur</div><div class="t" style="left:150px;top:364px;">False</div><div class="a" style="left:0;top:380px;width:14px;height:19px;background:#ebebf0"></div><div class="a" style="left:14px;top:398px;width:260px;height:1px;background:#f0f0f0"></div><div class="a" style="left:146px;top:380px;width:1px;height:19px;background:#f0f0f0"></div><div class="t" style="left:17px;top:383px">pbServerOnChange</div><div class="t" style="left:150px;top:383px;">False</div><div class="a" style="left:0;top:399px;width:14px;height:19px;background:#ebebf0"></div><div class="a" style="left:14px;top:417px;width:260px;height:1px;background:#f0f0f0"></div><div class="a" style="left:146px;top:399px;width:1px;height:19px;background:#f0f0f0"></div><div class="t" style="left:17px;top:402px">pbServerOnFocus</div><div class="t" style="left:150px;top:402px;">False</div><div class="a" style="left:0;top:418px;width:14px;height:19px;background:#ebebf0"></div><div class="a" style="left:14px;top:436px;width:260px;height:1px;background:#f0f0f0"></div><div class="a" style="left:146px;top:418px;width:1px;height:19px;background:#f0f0f0"></div><div class="t" style="left:17px;top:421px">pbServerOnValidate</div><div class="t" style="left:150px;top:421px;">C_WebDefault</div><div class="a" style="left:0;top:437px;width:14px;height:19px;background:#ebebf0"></div><div class="a" style="left:14px;top:455px;width:260px;height:1px;background:#f0f0f0"></div><div class="a" style="left:146px;top:437px;width:1px;height:19px;background:#f0f0f0"></div><div class="t" style="left:17px;top:440px">pbShowLabel</div><div class="t" style="left:150px;top:440px;">False</div><div class="a" style="left:0;top:456px;width:14px;height:19px;background:#ebebf0"></div><div class="a" style="left:14px;top:474px;width:260px;height:1px;background:#f0f0f0"></div><div class="a" style="left:146px;top:456px;width:1px;height:19px;background:#f0f0f0"></div><div class="t" style="left:17px;top:459px">pbUseHTMLEncoding</div><div class="t" style="left:150px;top:459px;font-weight:bold;color:#000;">True</div><div class="a" style="left:0;top:475px;width:14px;height:19px;background:#ebebf0"></div><div class="a" style="left:14px;top:493px;width:260px;height:1px;background:#f0f0f0"></div><div class="a" style="left:146px;top:475px;width:1px;height:19px;background:#f0f0f0"></div><div class="t" style="left:17px;top:478px">pbVisible</div><div class="t" style="left:150px;top:478px;">True</div><div class="a" style="left:0;top:494px;width:14px;height:19px;background:#ebebf0"></div><div class="a" style="left:14px;top:512px;width:260px;height:1px;background:#f0f0f0"></div><div class="a" style="left:146px;top:494px;width:1px;height:19px;background:#f0f0f0"></div><div class="t" style="left:17px;top:497px">peAlign</div><div class="t" style="left:150px;top:497px;">C_WebDefault</div><div class="a" style="left:0;top:513px;width:14px;height:19px;background:#ebebf0"></div><div class="a" style="left:14px;top:531px;width:260px;height:1px;background:#f0f0f0"></div><div class="a" style="left:146px;top:513px;width:1px;height:19px;background:#f0f0f0"></div><div class="t" style="left:17px;top:516px">peDataType</div><div class="t" style="left:150px;top:516px;">C_WebDefault</div><div class="a" style="left:0;top:532px;width:14px;height:19px;background:#ebebf0"></div><div class="a" style="left:14px;top:550px;width:260px;height:1px;background:#f0f0f0"></div><div class="a" style="left:146px;top:532px;width:1px;height:19px;background:#f0f0f0"></div><div class="t" style="left:17px;top:535px">peLabelAlign</div><div class="t" style="left:150px;top:535px;">C_WebDefault</div><div class="a" style="left:0;top:551px;width:14px;height:19px;background:#ebebf0"></div><div class="a" style="left:14px;top:569px;width:260px;height:1px;background:#f0f0f0"></div><div class="a" style="left:146px;top:551px;width:1px;height:19px;background:#f0f0f0"></div><div class="t" style="left:17px;top:554px">peLabelPosition</div><div class="t" style="left:150px;top:554px;">lpLeft</div><div class="a" style="left:0;top:570px;width:14px;height:19px;background:#ebebf0"></div><div class="a" style="left:14px;top:588px;width:260px;height:1px;background:#f0f0f0"></div><div class="a" style="left:146px;top:570px;width:1px;height:19px;background:#f0f0f0"></div><div class="t" style="left:17px;top:573px">piColumnIndex</div><div class="t" style="left:150px;top:573px;">0</div><div class="a" style="left:0;top:589px;width:14px;height:19px;background:#ebebf0"></div><div class="a" style="left:14px;top:607px;width:260px;height:1px;background:#f0f0f0"></div><div class="a" style="left:146px;top:589px;width:1px;height:19px;background:#f0f0f0"></div><div class="t" style="left:17px;top:592px">piColumnSpan</div><div class="t" style="left:150px;top:592px;font-weight:bold;color:#000;">12</div><div class="a" style="left:0;top:608px;width:14px;height:19px;background:#ebebf0"></div><div class="a" style="left:14px;top:626px;width:260px;height:1px;background:#f0f0f0"></div><div class="a" style="left:146px;top:608px;width:1px;height:19px;background:#f0f0f0"></div><div class="t" style="left:17px;top:611px">piHeight</div><div class="t" style="left:150px;top:611px;">-1</div><div class="a" style="left:0;top:627px;width:14px;height:19px;background:#ebebf0"></div><div class="a" style="left:14px;top:645px;width:260px;height:1px;background:#f0f0f0"></div><div class="a" style="left:146px;top:627px;width:1px;height:19px;background:#f0f0f0"></div><div class="t" style="left:17px;top:630px">piLabelOffset</div><div class="t" style="left:150px;top:630px;">C_WebDefault</div><div class="a" style="left:0;top:646px;width:14px;height:19px;background:#ebebf0"></div><div class="a" style="left:14px;top:664px;width:260px;height:1px;background:#f0f0f0"></div><div class="a" style="left:146px;top:646px;width:1px;height:19px;background:#f0f0f0"></div><div class="t" style="left:17px;top:649px">piMaxLength</div><div class="t" style="left:150px;top:649px;">C_WebDefault</div><div class="a" style="left:0;top:665px;width:14px;height:19px;background:#ebebf0"></div><div class="a" style="left:14px;top:683px;width:260px;height:1px;background:#f0f0f0"></div><div class="a" style="left:146px;top:665px;width:1px;height:19px;background:#f0f0f0"></div><div class="t" style="left:17px;top:668px">piMinHeight</div><div class="t" style="left:150px;top:668px;">0</div><div class="a" style="left:0;top:684px;width:14px;height:19px;background:#ebebf0"></div><div class="a" style="left:14px;top:702px;width:260px;height:1px;background:#f0f0f0"></div><div class="a" style="left:146px;top:684px;width:1px;height:19px;background:#f0f0f0"></div><div class="t" style="left:17px;top:687px">piPrecision</div><div class="t" style="left:150px;top:687px;">C_WebDefault</div><div class="a" style="left:0;top:703px;width:14px;height:19px;background:#ebebf0"></div><div class="a" style="left:14px;top:721px;width:260px;height:1px;background:#f0f0f0"></div><div class="a" style="left:146px;top:703px;width:1px;height:19px;background:#f0f0f0"></div><div class="t" style="left:17px;top:706px">psBackgroundColor</div><div class="t" style="left:150px;top:706px;"></div><div class="a" style="left:0;top:722px;width:14px;height:19px;background:#ebebf0"></div><div class="a" style="left:14px;top:740px;width:260px;height:1px;background:#f0f0f0"></div><div class="a" style="left:146px;top:722px;width:1px;height:19px;background:#f0f0f0"></div><div class="t" style="left:17px;top:725px">psClientOnAutoFind</div><div class="t" style="left:150px;top:725px;"></div><div class="a" style="left:0;top:741px;width:14px;height:19px;background:#ebebf0"></div><div class="a" style="left:14px;top:759px;width:260px;height:1px;background:#f0f0f0"></div><div class="a" style="left:146px;top:741px;width:1px;height:19px;background:#f0f0f0"></div><div class="t" style="left:17px;top:744px">psClientOnBlur</div><div class="t" style="left:150px;top:744px;"></div><div class="a" style="left:274px;top:0;width:17px;height:748px;background:#f0f0f0"></div><div class="a" style="left:275px;top:18px;width:15px;height:504px;background:#c2c2c2"></div><svg style="left:278px;top:5px" width="10" height="6"><path d="M1 5L5 1L9 5" stroke="#404040" stroke-width="1.6" fill="none"/></svg><svg style="left:278px;top:735px" width="10" height="6"><path d="M1 1L5 5L9 1" stroke="#404040" stroke-width="1.6" fill="none"/></svg></div><div class="a" style="left:1637px;top:527px;width:132px;height:19px;background:#3d8ee8"></div><div class="t" style="left:1640px;top:530px;color:#fff">pbFroalaTransformer</div><div class="a" style="left:1769px;top:527px;width:128px;height:19px;background:#fff"></div><div class="t" style="left:1773px;top:530px;font-weight:bold;color:#000">True</div><svg style="left:1883px;top:534px" width="9" height="5"><path d="M0 0H9L4.5 5Z" fill="#555"/></svg><div class="a" style="left:1632px;top:523px;width:271px;height:28px;border:4px solid #dc3f1c"></div><div class="a" style="left:1620px;top:995px;width:159px;height:21px;background:#e8e8e8;border:1px solid #d8d8d8"></div><div class="t" style="left:1644px;top:998px;letter-spacing:-0.2px">DDO Explorer [Feedbac...</div><div class="a" style="left:1779px;top:994px;width:136px;height:24px;background:#fcfcfc"></div><div class="t" style="left:1803px;top:998px">Properties (Inactive)</div><svg style="left:1584px;top:836px" width="8" height="10"><path d="M2 0H6V6H7V7H4.6V10H3.4V7H1V6H2Z" fill="#1e1e1e"/><path d="M4 0.5V6" stroke="#b9c5d6" stroke-width="0.8"/></svg><svg style="left:1601px;top:837px" width="8" height="8"><path d="M0.5 0.5L7.5 7.5M7.5 0.5L0.5 7.5" stroke="#1e1e1e" stroke-width="1.5"/></svg><svg style="left:228px;top:857px" width="14" height="14"><circle cx="8.5" cy="8" r="3.2" stroke="#2b2b2b" stroke-width="1.4" fill="none"/><path d="M6.3 10.4L3 13.6" stroke="#2b2b2b" stroke-width="1.8"/><path d="M1 3H6M3 1L1 3L3 5" stroke="#1f5fb4" stroke-width="1.6" fill="none"/></svg><svg style="left:249px;top:857px" width="14" height="14"><circle cx="8.5" cy="8" r="3.2" stroke="#2b2b2b" stroke-width="1.4" fill="none"/><path d="M6.3 10.4L3 13.6" stroke="#2b2b2b" stroke-width="1.8"/><path d="M1 3H6M4 1L6 3L4 5" stroke="#1f5fb4" stroke-width="1.6" fill="none"/></svg><div class="sep" style="left:269px;top:856px;height:18px"></div><svg style="left:277px;top:857px" width="14" height="14"><path d="M5 3.5H1.5V13H8V10" stroke="#2b2b2b" stroke-width="1.3" fill="none"/><path d="M5 1H12V10H5Z" stroke="#2b2b2b" stroke-width="1.3" fill="#fff"/></svg><svg style="left:298px;top:857px" width="14" height="14"><path d="M1.5 1.5L12.5 12.5M12.5 1.5L1.5 12.5" stroke="#c8141a" stroke-width="2.4"/></svg><div class="sep" style="left:319px;top:856px;height:18px"></div><svg style="left:326px;top:857px" width="14" height="14"><path d="M0.5 8V0.5H8" stroke="#777" fill="none"/><path d="M2.5 10V2.5H10" stroke="#777" fill="none"/><rect x="4.5" y="4.5" width="9" height="9" stroke="#555" fill="#fff"/><path d="M8.5 6.5V11.5M6 9H11" stroke="#1f5fb4" stroke-width="1.2"/></svg><svg style="left:348px;top:857px" width="14" height="14"><path d="M0.5 8V0.5H8" stroke="#777" fill="none"/><path d="M2.5 10V2.5H10" stroke="#777" fill="none"/><rect x="4.5" y="4.5" width="9" height="9" stroke="#555" fill="#fff"/><path d="M6 9H11" stroke="#1f5fb4" stroke-width="1.4"/></svg><div class="a" style="left:233px;top:878px;width:1px;height:100px;background-image:linear-gradient(#a0a0a0 50%,transparent 50%);background-size:1px 2px"></div><div class="a" style="left:248px;top:878px;width:1px;height:10px;background-image:linear-gradient(#a0a0a0 50%,transparent 50%);background-size:1px 2px"></div><div class="a" style="left:248px;top:888px;width:7px;height:1px;background:#a0a0a0"></div><div class="a" style="left:261px;top:969px;width:196px;height:18px;background:#ececec"></div><svg style="left:259px;top:881px" width="10" height="14"><path d="M1 1L9 7L1 13Z" stroke="#555" stroke-width="1.2" fill="#fff"/></svg><div class="t" style="left:276px;top:881px;color:#1e1e1e">Total Blocks &nbsp;: 14984</div><div class="a" style="left:234px;top:906px;width:8px;height:1px;background:#a0a0a0"></div><svg style="left:242px;top:899px" width="14" height="14"><circle cx="7" cy="7" r="6.3" fill="#222"/><rect x="4" y="4" width="6" height="6" fill="#fff"/></svg><div class="t" style="left:262px;top:899px;color:#1e1e1e">----Compile Finished----</div><div class="a" style="left:234px;top:924px;width:8px;height:1px;background:#a0a0a0"></div><svg style="left:242px;top:917px" width="14" height="14"><circle cx="7" cy="7" r="6.3" fill="#222"/><rect x="4" y="4" width="6" height="6" fill="#fff"/></svg><div class="t" style="left:262px;top:917px;color:#1e1e1e">----Executable written: C:\dev\repo\Editor-Sample\Programs\WebApp.exe</div><div class="a" style="left:234px;top:942px;width:8px;height:1px;background:#a0a0a0"></div><svg style="left:242px;top:935px" width="14" height="14"><circle cx="7" cy="7" r="6.5" fill="#1d7ad4"/><rect x="6" y="5.5" width="2" height="6" fill="#fff"/><rect x="6" y="2.5" width="2" height="2" fill="#fff"/></svg><div class="t" style="left:262px;top:935px;color:#1e1e1e">Starting web application: Editor Sample</div><div class="a" style="left:234px;top:960px;width:8px;height:1px;background:#a0a0a0"></div><svg style="left:242px;top:953px" width="14" height="14"><circle cx="7" cy="7" r="6.5" fill="#23a127"/><path d="M5 3.5L10.5 7L5 10.5Z" fill="#fff"/></svg><svg style="left:229px;top:955px" width="10" height="10"><rect x="0.5" y="0.5" width="8" height="8" fill="#f4f4f4" stroke="#a5a5a5"/><path d="M4.5 2.5V6.5M2.5 4.5H6.5" stroke="#3c5fb0" stroke-width="1"/></svg><div class="t" style="left:262px;top:953px;color:#1e1e1e">----Loading Program In Debugger----</div><div class="a" style="left:234px;top:978px;width:8px;height:1px;background:#a0a0a0"></div><svg style="left:242px;top:971px" width="14" height="14"><circle cx="7" cy="7" r="6.3" fill="#222"/><rect x="4" y="4" width="6" height="6" fill="#fff"/></svg><div class="t" style="left:262px;top:971px;color:#1e1e1e">----Exiting Program In Debugger----</div><div class="a" style="left:1595px;top:878px;width:16px;height:114px;background:#f0f0f0"></div><div class="a" style="left:1596px;top:957px;width:15px;height:16px;background:#c2c2c2"></div><svg style="left:1599px;top:884px" width="10" height="6"><path d="M1 5L5 1L9 5" stroke="#404040" stroke-width="1.6" fill="none"/></svg><svg style="left:1599px;top:980px" width="10" height="6"><path d="M1 1L5 5L9 1" stroke="#404040" stroke-width="1.6" fill="none"/></svg><div class="a" style="left:223px;top:995px;width:205px;height:21px;background:#e8e8e8;border:1px solid #d8d8d8"></div><div class="t" style="left:246px;top:998px">Problem Resolution [WebApp.src]</div><div class="a" style="left:428px;top:994px;width:68px;height:24px;background:#fcfcfc"></div><div class="t" style="left:451px;top:998px">Output</div><div class="a" style="left:496px;top:995px;width:152px;height:21px;background:#e8e8e8;border:1px solid #d8d8d8"></div><div class="t" style="left:519px;top:998px">To Do List [WebApp.src]</div><div class="a" style="left:648px;top:995px;width:90px;height:21px;background:#e8e8e8;border:1px solid #d8d8d8"></div><div class="t" style="left:671px;top:998px">Find Results</div><svg style="left:228px;top:998px" width="16" height="14"><rect x="0.5" y="1.5" width="14" height="12" fill="#fff" stroke="#333"/><rect x="0" y="0" width="15" height="2" fill="#333"/><path d="M3.5 6L6.5 12H0.5Z" fill="#f2c200"/><path d="M8 8L10 11L14 4" stroke="#222" stroke-width="1.4" fill="none"/></svg><svg style="left:433px;top:998px" width="16" height="14"><path d="M6 1H1V13H6" stroke="#333" stroke-width="1.3" fill="none"/><path d="M4 7H13M9.5 3.5L13 7L9.5 10.5" stroke="#222" stroke-width="1.8" fill="none"/></svg><svg style="left:502px;top:997px" width="14" height="16"><rect x="1" y="3" width="11" height="12" fill="none" stroke="#333" stroke-width="1.2"/><rect x="4" y="1" width="5" height="3" fill="#fff" stroke="#333"/><path d="M3.5 9L6 12L10.5 5" stroke="#222" stroke-width="1.4" fill="none"/></svg><svg style="left:655px;top:997px" width="14" height="16"><path d="M3 1H9L13 5V15H3Z" fill="#fff" stroke="#333" stroke-width="1.1"/><circle cx="6" cy="10" r="2.4" fill="none" stroke="#1f5fb4" stroke-width="1.3"/><path d="M4.2 12L1.5 14.8" stroke="#1f5fb4" stroke-width="1.6"/></svg><svg style="left:2px;top:3px" width="17" height="17"><path d="M0 1H16V13L13 16H0Z" fill="#d63a1c"/><path d="M0 1H2V16H0Z" fill="#f08a70"/><path d="M4 4H7.5Q10 4 10 8.5Q10 13 7.5 13H4ZM5.6 5.6V11.4H7.3Q8.4 11.4 8.4 8.5Q8.4 5.6 7.3 5.6Z" fill="#fff"/><path d="M10.5 4H14.5V5.6H12.1V7.8H14V9.4H12.1V13H10.5Z" fill="#fff"/></svg><div class="a" style="left:1799px;top:10px;width:11px;height:1px;background:#1e1e1e"></div><svg style="left:1843px;top:5px" width="12" height="12"><path d="M2.5 2.5V0.5H10.5V8.5H8.5" stroke="#1e1e1e" fill="none"/><rect x="0.5" y="2.5" width="8" height="8" stroke="#1e1e1e" fill="none"/></svg><svg style="left:1889px;top:5px" width="12" height="12"><path d="M0.5 0.5L11 11M11 0.5L0.5 11" stroke="#1e1e1e" stroke-width="1.1"/></svg><svg style="left:187px;top:106px" width="8" height="10"><path d="M2 0H6V6H7V7H4.6V10H3.4V7H1V6H2Z" fill="#1e1e1e"/><path d="M4.3 0.5V6" stroke="#bac6d8" stroke-width="0.8"/></svg><svg style="left:204px;top:107px" width="8" height="8"><path d="M0.5 0.5L7.5 7.5M7.5 0.5L0.5 7.5" stroke="#1e1e1e" stroke-width="1.5"/></svg><svg style="left:1890px;top:106px" width="8" height="10"><path d="M2 0H6V6H7V7H4.6V10H3.4V7H1V6H2Z" fill="#1e1e1e"/><path d="M4.3 0.5V6" stroke="#8eaacc" stroke-width="0.8"/></svg><svg style="left:1907px;top:107px" width="8" height="8"><path d="M0.5 0.5L7.5 7.5M7.5 0.5L0.5 7.5" stroke="#1e1e1e" stroke-width="1.5"/></svg><svg style="left:200px;top:135px" width="11" height="7"><path d="M0.7 0.7L5.5 5.5L10.3 0.7" stroke="#333" stroke-width="1.3" fill="none"/></svg><svg style="left:9px;top:159px" width="30" height="20"><rect x="0.5" y="4.5" width="9" height="9" fill="#f4f4f4" stroke="#a5a5a5"/><path d="M5 6.5V11.5M3 9H7" stroke="#3c5fb0"/><path d="M10 9H12" stroke="#a0a0a0"/><rect x="13.5" y="1.5" width="13" height="11" fill="#fff" stroke="#222"/><rect x="13" y="1" width="14" height="2" fill="#222"/><circle cx="16" cy="13" r="4" fill="#555"/><path d="M12 13H20M16 9V17" stroke="#ccc" stroke-width="0.6"/></svg><svg style="left:1558px;top:106px" width="8" height="10"><path d="M6.5 0.5L1 5L6.5 9.5Z" stroke="#999" fill="none"/></svg><svg style="left:1572px;top:106px" width="8" height="10"><path d="M1 0.5L6.5 5L1 9.5Z" stroke="#999" fill="none"/></svg><svg style="left:1585px;top:110px" width="9" height="5"><path d="M0 0H9L4.5 5Z" fill="#333"/></svg><svg style="left:1599px;top:106px" width="11" height="11"><path d="M0.7 0.7L10.3 10.3M10.3 0.7L0.7 10.3" stroke="#333" stroke-width="1.4"/></svg><svg style="left:437px;top:108px" width="9" height="9"><path d="M0.7 0.7L8.3 8.3M8.3 0.7L0.7 8.3" stroke="#fff" stroke-width="1.8"/></svg><div class="a" style="left:1596px;top:124px;width:15px;height:6px;background:#c8c8cc"></div><svg style="left:1599px;top:137px" width="10" height="6"><path d="M1 5L5 1L9 5" stroke="#404040" stroke-width="1.6" fill="none"/></svg><svg style="left:1599px;top:796px" width="10" height="6"><path d="M1 1L5 5L9 1" stroke="#404040" stroke-width="1.6" fill="none"/></svg><div class="a" style="left:222px;top:809px;width:5px;height:15px;background:#d0d0d4"></div><svg style="left:234px;top:812px" width="6" height="10"><path d="M5 1L1 5L5 9" stroke="#404040" stroke-width="1.6" fill="none"/></svg><svg style="left:1583px;top:812px" width="6" height="10"><path d="M1 1L5 5L1 9" stroke="#404040" stroke-width="1.6" fill="none"/></svg><svg style="left:1690px;top:1021px" width="17" height="17"><circle cx="8.5" cy="8.5" r="7.6" fill="#fff" stroke="#d0211c" stroke-width="1.4"/><circle cx="8.5" cy="8.5" r="5.6" fill="none" stroke="#d0211c" stroke-width="1"/><rect x="7.4" y="4" width="2.2" height="6" fill="#d0211c"/><rect x="7.4" y="11" width="2.2" height="2.2" fill="#d0211c"/></svg><svg style="left:1759px;top:1021px" width="17" height="17"><circle cx="8.5" cy="8.5" r="7" fill="#fff" stroke="#888" stroke-width="2"/><path d="M3.8 3.8L13.2 13.2" stroke="#777" stroke-width="2.2"/></svg><div class="t" style="left:1837px;top:1022px;color:#62a8e8">CAPS</div><div class="t" style="left:1881px;top:1022px;color:#fff">NUM</div><svg style="left:17px;top:1053px" width="17" height="15"><path d="M0 2L7 1V7H0ZM8 0.9L16 0V7H8ZM0 8H7V14L0 13ZM8 8H16V15L8 14.1Z" fill="#111"/></svg><svg style="left:1626px;top:218px" width="16" height="18"><rect x="1.5" y="1.5" width="6" height="7" fill="#fff" stroke="#555"/><rect x="1.5" y="10.5" width="6" height="7" fill="#fff" stroke="#555"/><circle cx="4.5" cy="5" r="1" fill="#111"/><circle cx="4.5" cy="14" r="1" fill="#111"/><path d="M9 3.5H12M9 14.5H12" stroke="#333" stroke-width="1.2"/><path d="M10 5.5V13M12 5.5V16" stroke="#999" stroke-dasharray="1 1"/></svg><svg style="left:1649px;top:218px" width="16" height="18"><text x="0" y="8" font-family="Liberation Sans" font-size="9.5" font-weight="bold" fill="#222">A</text><text x="0.5" y="16.5" font-family="Liberation Sans" font-size="9.5" font-weight="bold" fill="#222">2</text><path d="M10.5 1V14" stroke="#1a2aa0" stroke-width="1.3"/><path d="M8 11L10.5 16L13 11Z" fill="#1a2aa0"/></svg><svg style="left:1625px;top:998px" width="18" height="15"><path d="M6.5 6V9M2.5 12V9.5H10V12" stroke="#222" stroke-width="1.1" fill="none"/><rect x="5" y="4.5" width="3" height="3" fill="#222"/><rect x="1" y="11.5" width="3" height="3" fill="#222"/><rect x="8.5" y="11.5" width="3" height="3" fill="#222"/><path d="M9 1.5H16V9Q12.5 11 9 9Z" fill="#222"/><ellipse cx="12.5" cy="1.8" rx="3.5" ry="1.4" fill="#bbb" stroke="#222" stroke-width="0.6"/></svg><svg style="left:1785px;top:998px" width="16" height="16"><rect x="4.5" y="0.5" width="10" height="13" fill="#fff" stroke="#333"/><path d="M6.5 3H12.5M6.5 5.5H12.5M6.5 8H12.5M6.5 10.5H12.5" stroke="#777" stroke-dasharray="2 1"/><path d="M2.5 7V15" stroke="#222" stroke-width="2"/><path d="M1 8L2.5 10L4 8V6" stroke="#222" stroke-width="1" fill="none"/></svg><svg style="left:1797px;top:521px" width="20" height="28"><path d="M1 1V20L5.5 15.5L9.5 24L13 22.5L9 14H15.5Z" fill="#fff" stroke="#222" stroke-width="1.2" stroke-linejoin="round"/></svg></body></html>
